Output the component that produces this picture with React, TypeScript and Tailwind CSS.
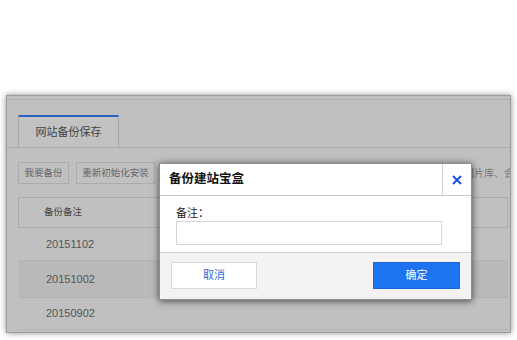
import React from "react";

const font = { fontFamily: '"Liberation Sans", "Noto Sans CJK SC", sans-serif' };

const rows = [
  { id: "20151102", h: "h-[33px]", bg: "bg-[#c0c0c0]" },
  { id: "20151002", h: "h-[37px]", bg: "bg-[#b9b9b9]" },
  { id: "20150902", h: "h-[32px]", bg: "bg-[#c0c0c0]" },
];

function BackupDialog() {
  return (
    <div className="absolute left-[159px] top-[163px] w-[313px] h-[137px] bg-white border border-[#8f8f8f] shadow-[0_1px_7px_rgba(0,0,0,0.65)] flex flex-col">
      <div className="h-[32px] flex items-stretch border-b border-[#c9c9c9]">
        <div className="flex-1 flex items-center pl-[9px] text-[12.5px] text-[#111] font-semibold">
          备份建站宝盒
        </div>
        <div className="w-[29px] border-l border-[#d0d0d0] flex items-center justify-center">
          <svg width="10" height="10" viewBox="0 0 10 10">
            <path d="M1 1 L9 9 M9 1 L1 9" stroke="#1a4fe6" strokeWidth="2" />
          </svg>
        </div>
      </div>
      <div className="h-[56px] pl-[16px] pr-[29px] pt-[10px]">
        <div className="text-[11px] leading-[14px] text-[#222]">备注：</div>
        <div className="mt-[1px] h-[24px] border border-[#d6d6d6] bg-white" />
      </div>
      <div className="flex-1 bg-[#f4f2f3] border-t border-[#d2d2d2] flex items-start justify-between px-[11px] pt-[9px]">
        <button className="w-[86px] h-[27px] bg-white border border-[#d8d8d8] text-[11px] text-[#1f6fe8]">
          取消
        </button>
        <button className="w-[87px] h-[27px] bg-[#1e74f0] border border-[#1a66dc] text-[11px] text-white">
          确定
        </button>
      </div>
    </div>
  );
}

export default function App() {
  return (
    <div className="relative w-[517px] h-[340px] bg-white overflow-hidden pt-[95px] pl-[6px]" style={font}>
      <div className="w-[505px] h-[238px] bg-[#c0c0c0] border border-[#9c9c9c] shadow-[0_0_6px_rgba(0,0,0,0.45)] overflow-hidden">
        <div className="border-t border-[#b0b0b0] mt-[3px] pt-[15px] border-b border-b-[#adadad] pl-[11px] flex">
          <div className="w-[101px] h-[32px] border-t-2 border-t-[#2a62c4] border-x border-x-[#a9a9a9] bg-[#c2c2c2] flex items-center justify-center text-[11px] text-[#444]">
            网站备份保存
          </div>
        </div>
        <div className="flex items-center pl-[11px] mt-[14px] text-[9.5px] text-[#666] whitespace-nowrap">
          <div className="shrink-0 w-[51px] h-[22px] border border-[#acacac] flex items-center justify-center">我要备份</div>
          <div className="shrink-0 ml-[7px] w-[79px] h-[22px] border border-[#acacac] flex items-center justify-center">重新初始化安装</div>
          <span className="shrink-0 ml-[309px] text-[10px] text-[#777]">图片库、会员</span>
        </div>
        <div className="ml-[11px] mt-[13px] w-[490px]">
          <div className="h-[31px] border border-[#ababab] flex items-center pl-[25px] text-[9.5px] text-[#444]">
            备份备注
          </div>
          {rows.map((r) => (
            <div
              key={r.id}
              className={`${r.h} ${r.bg} border-b border-[#b3b3b3] flex items-center pl-[28px] text-[11px] text-[#555]`}
            >
              {r.id}
            </div>
          ))}
        </div>
      </div>
      <BackupDialog />
    </div>
  );
}
